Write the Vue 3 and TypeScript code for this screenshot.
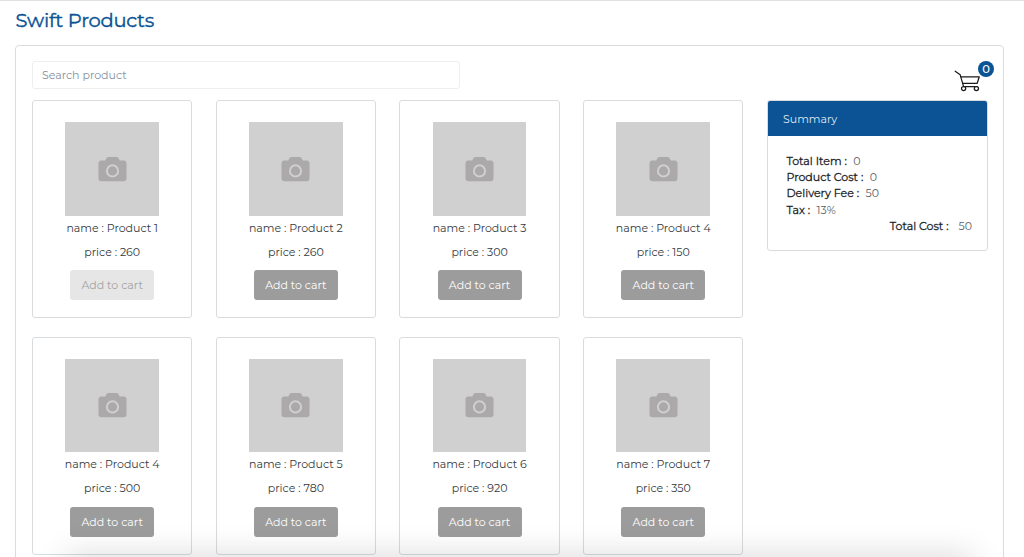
<script setup lang="ts">
import { ref, computed } from 'vue'

interface Product {
  name: string
  price: number
  disabled?: boolean
}

const products: Product[] = [
  { name: 'Product 1', price: 260, disabled: true },
  { name: 'Product 2', price: 260 },
  { name: 'Product 3', price: 300 },
  { name: 'Product 4', price: 150 },
  { name: 'Product 4', price: 500 },
  { name: 'Product 5', price: 780 },
  { name: 'Product 6', price: 920 },
  { name: 'Product 7', price: 350 },
]

const search = ref('')
const cart = ref<Product[]>([])
const deliveryFee = 50
const tax = 13

const visible = computed(() =>
  products.filter((p) => p.name.toLowerCase().includes(search.value.toLowerCase())),
)
const productCost = computed(() => cart.value.reduce((sum, p) => sum + p.price, 0))
const totalCost = computed(() => productCost.value * (1 + tax / 100) + deliveryFee)
</script>

<template>
  <div class="page">
    <h1 class="title">Swift Products</h1>
    <main class="panel">
      <div class="toolbar">
        <input v-model="search" class="search" type="text" placeholder="Search product" />
        <div class="cart">
          <svg width="28" height="24" viewBox="0 0 28 24" fill="none" stroke="#1b1b1b" stroke-width="1.25" stroke-linecap="round" stroke-linejoin="round">
            <path d="M1.2 2.2 L6.2 5.8 L9.6 17.6 H23.5" />
            <path d="M6.8 7.8 H25.3 L23.2 14.3 H8.5" />
            <circle cx="9.6" cy="19.6" r="2.1" fill="#fff" />
            <circle cx="22.4" cy="19.6" r="2.1" fill="#fff" />
          </svg>
          <span class="badge">{{ cart.length }}</span>
        </div>
      </div>
      <div class="content">
        <section class="grid">
          <article v-for="(p, i) in visible" :key="i" class="card">
            <div class="thumb">
              <svg width="29" height="26" viewBox="0 0 29 26">
                <path fill="#aba9aa" d="M3.5 4.5H7.2C7.8 4.5 8 1 10.5 1H18.5C21 1 21.2 4.5 21.8 4.5H25.5Q28.5 4.5 28.5 7.5V22Q28.5 25.3 25.5 25.3H3.5Q.5 25.3 .5 22V7.5Q.5 4.5 3.5 4.5Z" />
                <circle cx="14.5" cy="14.9" r="5.6" fill="none" stroke="#d0d0d0" stroke-width="2" />
              </svg>
            </div>
            <p class="name">name : {{ p.name }}</p>
            <p class="price">price : {{ p.price }}</p>
            <button class="add" :disabled="p.disabled" @click="cart.push(p)">Add to cart</button>
          </article>
        </section>
        <aside class="summary">
          <header>Summary</header>
          <div class="lines">
            <div><b>Total Item :</b><span>{{ cart.length }}</span></div>
            <div><b>Product Cost :</b><span>{{ productCost }}</span></div>
            <div><b>Delivery Fee :</b><span>{{ deliveryFee }}</span></div>
            <div><b>Tax :</b><span>{{ tax }}%</span></div>
            <div class="total"><b>Total Cost :</b><span>{{ totalCost }}</span></div>
          </div>
        </aside>
      </div>
    </main>
    <div class="shade"></div>
  </div>
</template>

<style>
body {
  margin: 0;
  background: #fff;
  overflow: hidden;
}
</style>

<style scoped>
* {
  box-sizing: border-box;
}
.page {
  position: relative;
  height: 557px;
  overflow: hidden;
  border-top: 1px solid #e2e2e2;
  padding: 0 20px 0 15px;
  font-family: Montserrat, Inter, sans-serif;
  font-size: 11px;
  color: #343a40;
}
.title {
  margin: 0;
  padding: 7px 0 0 0.5px;
  height: 44px;
  font-size: 19.5px;
  line-height: 25px;
  font-weight: 400;
  -webkit-text-stroke: 0.4px #0b5394;
  letter-spacing: -0.25px;
  color: #0b5394;
}
.panel {
  height: 640px;
  border: 1px solid #dadddf;
  border-radius: 4px;
  padding: 15px 15px 0 16px;
}
.toolbar {
  display: flex;
  justify-content: space-between;
  height: 39px;
}
.search {
  width: 428px;
  height: 28px;
  border: 1px solid #eceef0;
  border-radius: 3px;
  padding: 0 9px;
  font: inherit;
  color: #343a40;
  outline: none;
}
.search::placeholder {
  color: #8490a0;
  opacity: 1;
}
.cart {
  position: relative;
  width: 34px;
  height: 32px;
  padding-top: 8px;
}
.cart svg {
  display: block;
}
.badge {
  position: absolute;
  left: 24px;
  top: 0;
  width: 16px;
  height: 16px;
  border-radius: 50%;
  background: #0b5394;
  color: #fff;
  text-align: center;
  font-size: 11.5px;
  font-weight: 500;
  line-height: 17px;
}
.content {
  display: flex;
  justify-content: space-between;
  align-items: flex-start;
}
.grid {
  display: grid;
  grid-template-columns: repeat(4, 160.4px);
  column-gap: 23.3px;
  row-gap: 18.5px;
}
.card {
  height: 218px;
  border: 1px solid #d9dcdf;
  border-radius: 3px;
  padding-top: 21px;
  display: flex;
  flex-direction: column;
  align-items: center;
}
.thumb {
  width: 93.6px;
  height: 93.5px;
  background: #d0d0d0;
  display: flex;
  align-items: center;
  justify-content: center;
}
.name,
.price {
  margin: 0;
  line-height: 24.2px;
}
.add {
  margin-top: 6.3px;
  width: 84px;
  height: 30px;
  border: 0;
  border-radius: 3px;
  background: #9c9c9c;
  color: #fff;
  font: inherit;
  padding: 0;
}
.add:disabled {
  background: #e6e6e6;
  color: #a3a3a3;
}
.summary {
  width: 221.5px;
  height: 150.5px;
  border: 1px solid #d9dcdf;
  border-radius: 3px;
  overflow: hidden;
}
.summary header {
  height: 36px;
  margin: -1px -1px 0;
  line-height: 38px;
  padding-left: 16.5px;
  background: #0b5394;
  color: #dfe8f1;
}
.lines {
  padding: 16.8px 15px 0 19px;
  line-height: 16.3px;
}
.lines b {
  font-weight: 400;
  -webkit-text-stroke: 0.3px #212529;
  color: #212529;
}
.lines span {
  margin-left: 6.5px;
  color: #5b6065;
}
.lines .total {
  text-align: right;
}
.lines .total span {
  margin-left: 10px;
}
.shade {
  position: absolute;
  left: 70px;
  right: 55px;
  bottom: -24px;
  height: 22px;
  box-shadow: 0 0 32px 4px rgba(0, 0, 0, 0.15);
  pointer-events: none;
}
</style>
